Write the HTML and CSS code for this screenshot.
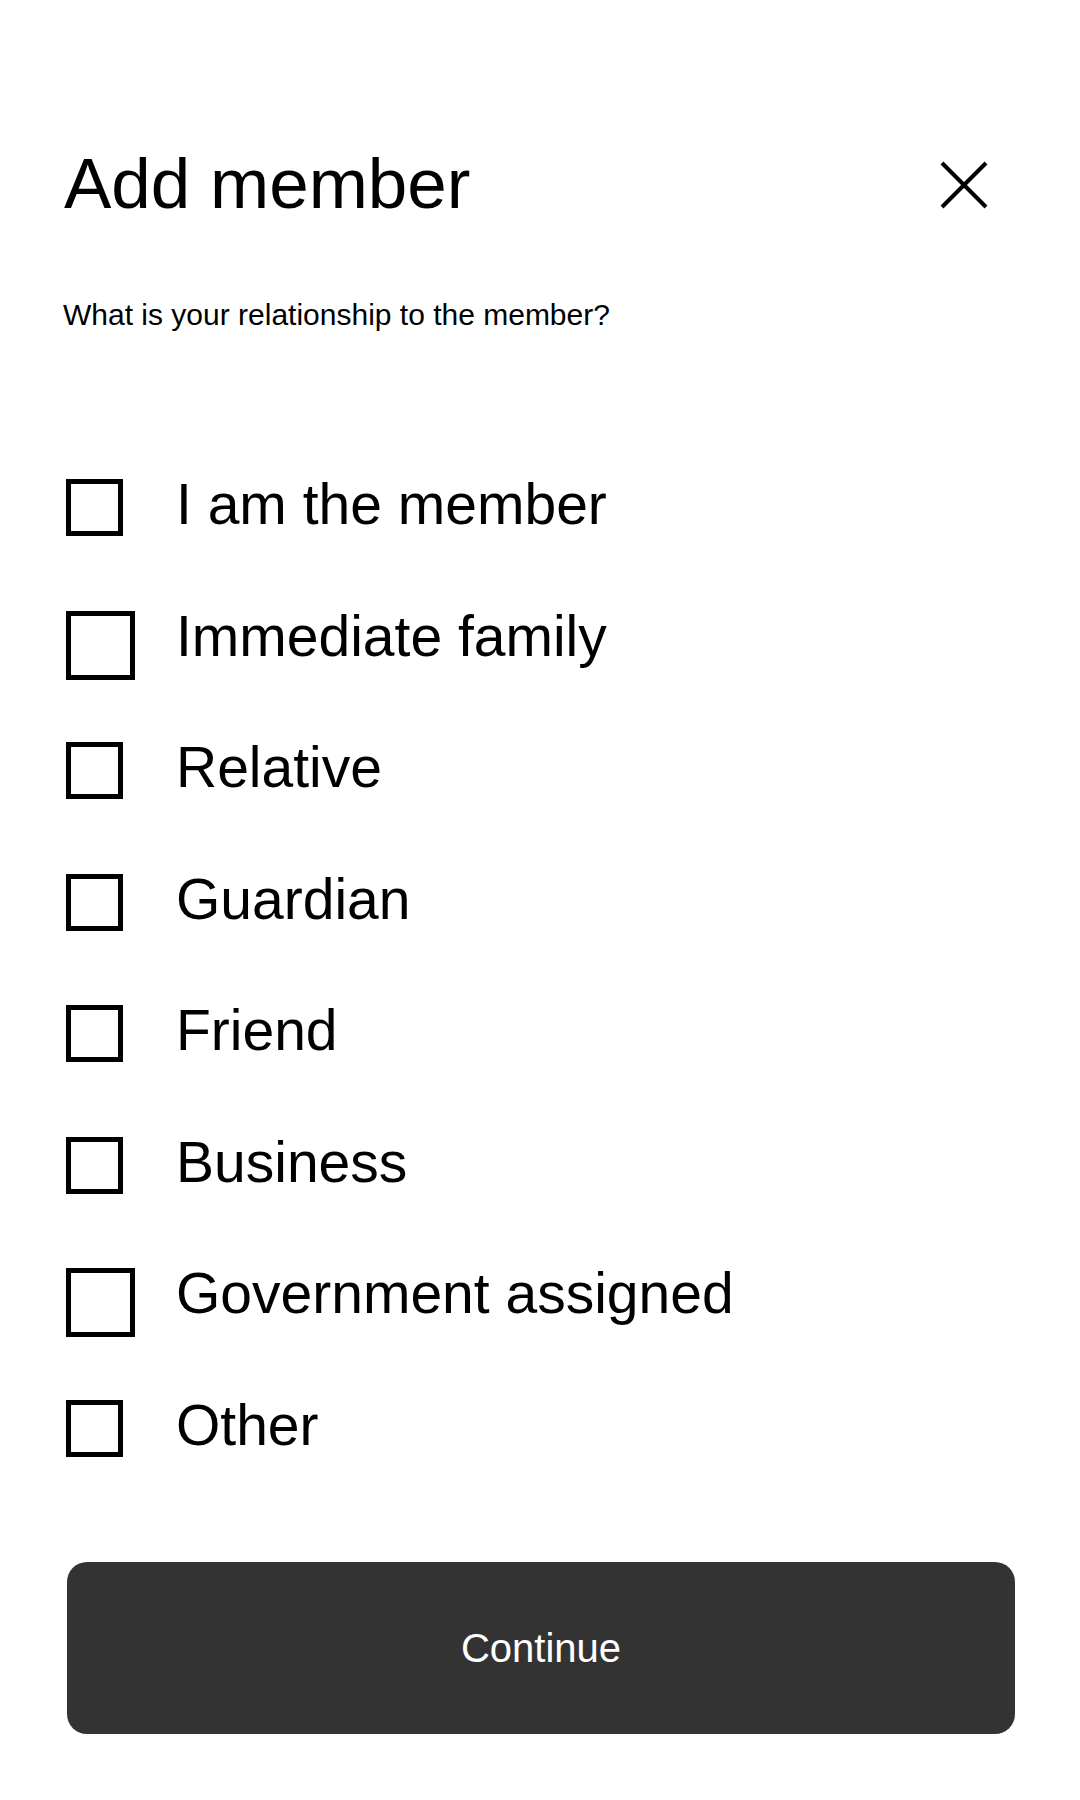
FILE: index.html
```html
<!DOCTYPE html>
<html lang="en">
<head>
<meta charset="utf-8">
<title>Add member</title>
<link rel="stylesheet" href="styles.css">
</head>
<body>
<main class="sheet">
  <header class="header">
    <h1 class="title">Add member</h1>
    <button class="close" type="button" aria-label="Close">
      <svg width="48" height="48" viewBox="0 0 48 48" aria-hidden="true">
        <path d="M2 2 L46 46 M46 2 L2 46" stroke="#000" stroke-width="4" fill="none"/>
      </svg>
    </button>
  </header>
  <p class="question">What is your relationship to the member?</p>
  <ul class="options">
    <li class="option"><span class="slot"><span class="box"></span></span><span class="label">I am the member</span></li>
    <li class="option"><span class="slot"><span class="box box-lg"></span></span><span class="label">Immediate family</span></li>
    <li class="option"><span class="slot"><span class="box"></span></span><span class="label">Relative</span></li>
    <li class="option"><span class="slot"><span class="box"></span></span><span class="label">Guardian</span></li>
    <li class="option"><span class="slot"><span class="box"></span></span><span class="label">Friend</span></li>
    <li class="option"><span class="slot"><span class="box"></span></span><span class="label">Business</span></li>
    <li class="option"><span class="slot"><span class="box box-lg"></span></span><span class="label">Government assigned</span></li>
    <li class="option"><span class="slot"><span class="box"></span></span><span class="label">Other</span></li>
  </ul>
  <button class="continue" type="button">Continue</button>
</main>
</body>
</html>
```

FILE: styles.css
```css
html, body {
  margin: 0;
  padding: 0;
  background: #fff;
}
body {
  font-family: "Liberation Sans", Arial, sans-serif;
  color: #000;
  width: 1080px;
  height: 1800px;
}
.sheet {
  display: flex;
  flex-direction: column;
}
.header {
  display: flex;
  align-items: center;
  justify-content: space-between;
  padding: 148px 92px 0 64px;
}
.title {
  margin: 0;
  font-size: 71px;
  line-height: 71px;
  font-weight: 400;
}
.close {
  border: 0;
  background: none;
  padding: 0;
  margin-top: 3px;
  width: 48px;
  height: 48px;
  display: flex;
}
.question {
  margin: 78px 0 0 63px;
  font-size: 30px;
  line-height: 36px;
}
.options {
  list-style: none;
  margin: 139px 0 0 0;
  padding: 0 0 0 66px;
  display: flex;
  flex-direction: column;
}
.option {
  height: 131.5px;
  display: flex;
  align-items: flex-start;
}
.slot {
  width: 110px;
  flex: none;
  display: flex;
  padding-top: 7px;
}
.box {
  box-sizing: border-box;
  width: 57px;
  height: 57px;
  border: 5px solid #000;
}
.box-lg {
  width: 69px;
  height: 69px;
}
.label {
  font-size: 57px;
  line-height: 64px;
}
.continue {
  margin: 38px 65px 0 67px;
  height: 172px;
  border: 0;
  border-radius: 20px;
  background: #333333;
  color: #fff;
  font-family: "Liberation Sans", Arial, sans-serif;
  font-size: 40px;
  padding: 0;
}
```
